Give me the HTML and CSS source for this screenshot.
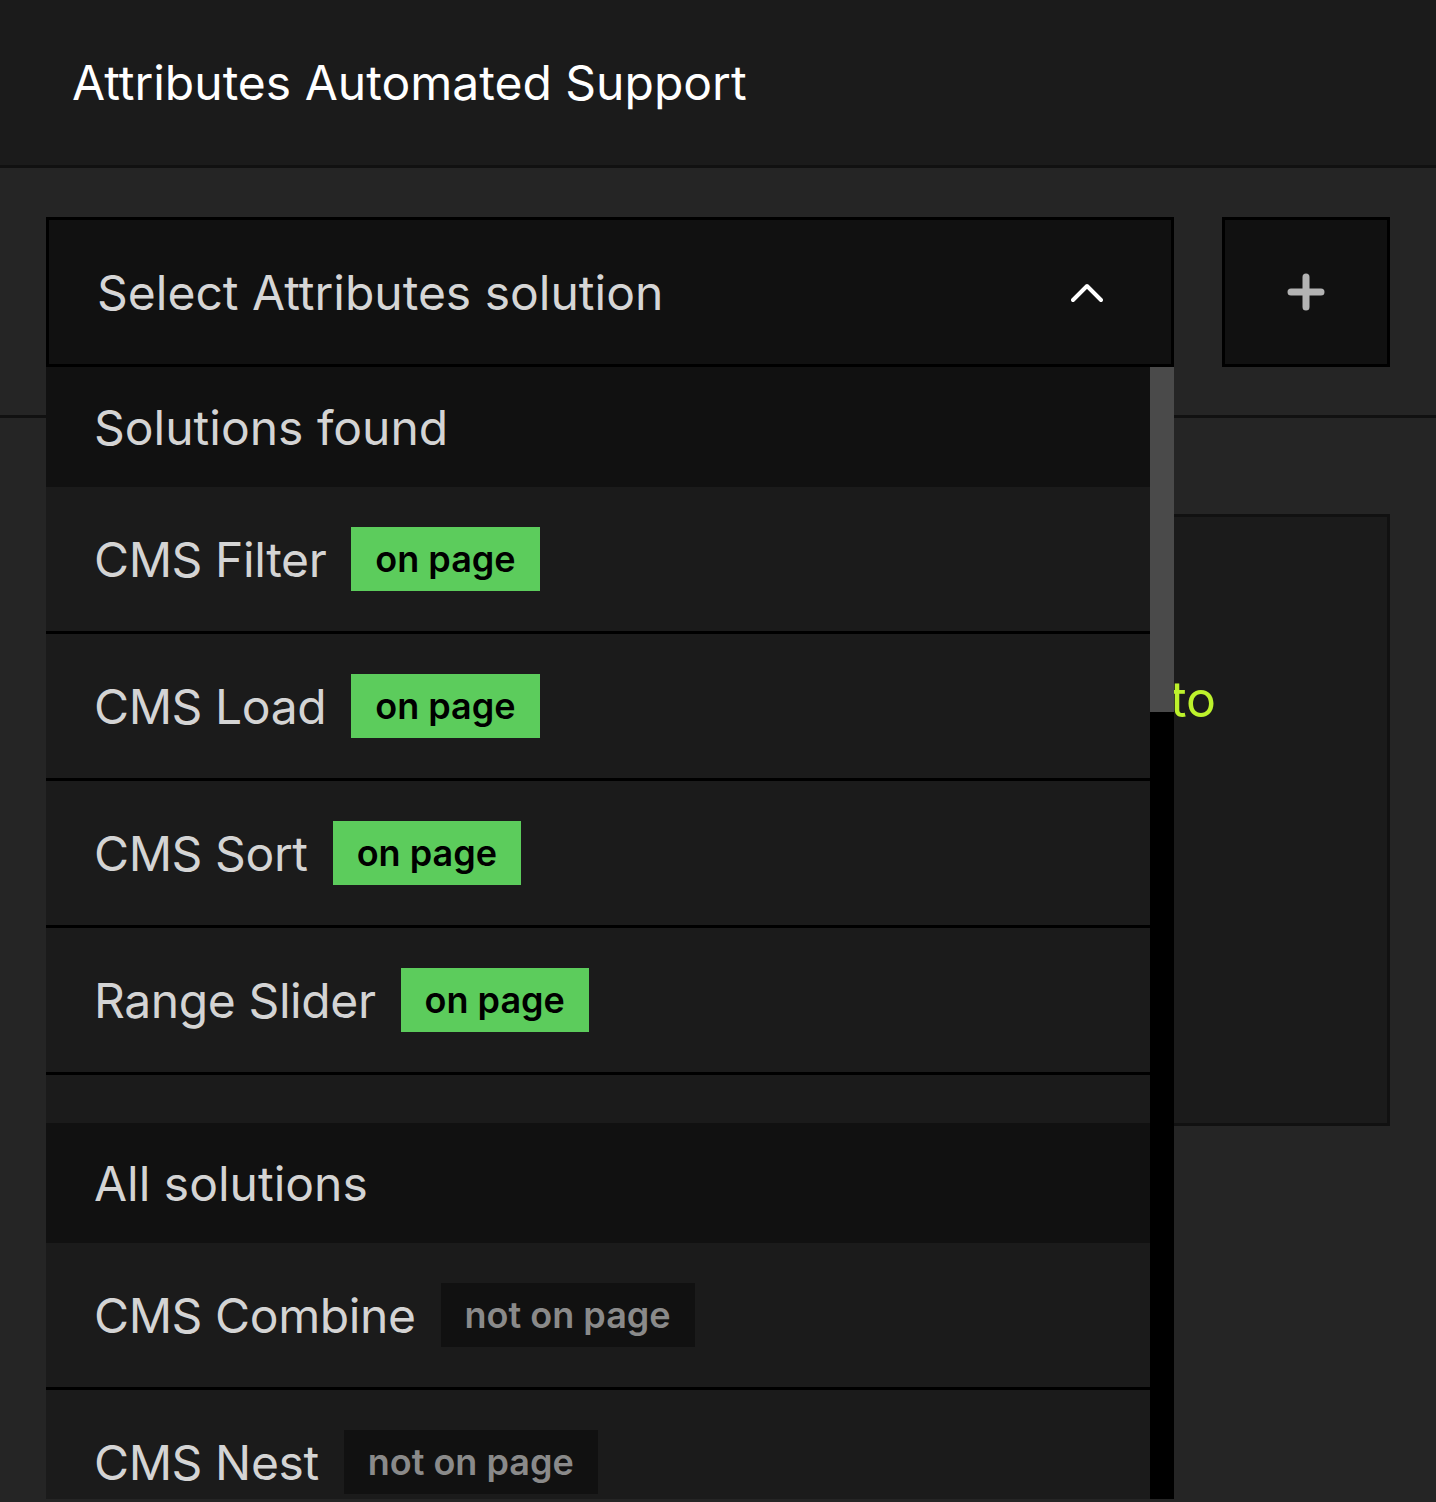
FILE: index.html
```html
<!DOCTYPE html>
<html lang="en">
<head>
  <meta charset="UTF-8" />
  <meta name="viewport" content="width=device-width, initial-scale=1.0"/>
  <title>Attributes Automated Support</title>
  <link rel="stylesheet" href="styles.css">
</head>
<body>

  <header class="topbar">
    <h1>Attributes Automated Support</h1>
  </header>

  <section class="toolbar">
    <div class="select-wrap">
      <button class="select">
        <span>Select Attributes solution</span>
        <svg class="chevron" width="32" height="22" viewBox="0 0 32 22">
          <polyline points="2,19 16,5 30,19" fill="none" stroke="#fff" stroke-width="4" stroke-linecap="round" stroke-linejoin="round"/>
        </svg>
      </button>

      <div class="dropdown">
        <div class="options">
          <div class="group">
            <div class="group-title">Solutions found</div>
            <div class="option">CMS Filter <span class="badge on">on page</span></div>
            <div class="option">CMS Load <span class="badge on">on page</span></div>
            <div class="option">CMS Sort <span class="badge on">on page</span></div>
            <div class="option">Range Slider <span class="badge on">on page</span></div>
          </div>
          <div class="group">
            <div class="group-title">All solutions</div>
            <div class="option">CMS Combine <span class="badge off">not on page</span></div>
            <div class="option">CMS Nest <span class="badge off">not on page</span></div>
            <div class="option">CMS Prev-Next <span class="badge off">not on page</span></div>
            <div class="option">CMS Select <span class="badge off">not on page</span></div>
            <div class="option">CMS Slider <span class="badge off">not on page</span></div>
            <div class="option">CMS Tabs <span class="badge off">not on page</span></div>
            <div class="option">CMS Static <span class="badge off">not on page</span></div>
            <div class="option">CMS Anchor <span class="badge off">not on page</span></div>
            <div class="option">Copy to Clipboard <span class="badge off">not on page</span></div>
            <div class="option">Accordion <span class="badge off">not on page</span></div>
            <div class="option">Auto Video <span class="badge off">not on page</span></div>
            <div class="option">Auto Tabs <span class="badge off">not on page</span></div>
            <div class="option">Table of Contents <span class="badge off">not on page</span></div>
            <div class="option">Social Share <span class="badge off">not on page</span></div>
            <div class="option">Read Time <span class="badge off">not on page</span></div>
            <div class="option">Number Count <span class="badge off">not on page</span></div>
            <div class="option">Mirror Click <span class="badge off">not on page</span></div>
            <div class="option">Mirror Input <span class="badge off">not on page</span></div>
            <div class="option">Modal <span class="badge off">not on page</span></div>
          </div>
        </div>
        <div class="scrollbar"><div class="thumb"></div></div>
      </div>
    </div>

    <button class="add-btn">
      <svg width="38" height="38" viewBox="0 0 38 38">
        <path d="M19 4 V34 M4 19 H34" stroke="#b3b3b3" stroke-width="7" stroke-linecap="round"/>
      </svg>
    </button>
  </section>

  <main class="content">
    <div class="card">
      <p class="empty-msg">Pick a solution from the list to</p>
    </div>
  </main>

</body>
</html>
```

FILE: styles.css
```css
body {
  margin: 0;
  font-family: 'Inter', 'Liberation Sans', sans-serif;
  background: #252525;
  color: #d4d4d4;
  min-height: 100vh;
  overflow: hidden;
}

.topbar {
  height: 165px;
  background: #1b1b1b;
  border-bottom: 3px solid #111;
  display: flex;
  align-items: center;
  padding-left: 72px;
}

.topbar h1 {
  margin: 0;
  font-size: 48px;
  font-weight: 400;
  color: #fff;
}

.toolbar {
  display: flex;
  gap: 48px;
  padding: 49px 46px 48px;
  border-bottom: 3px solid #111;
}

.select-wrap {
  position: relative;
  flex: 1;
}

.select {
  width: 100%;
  height: 150px;
  display: flex;
  align-items: center;
  justify-content: space-between;
  padding: 0 68px 0 48px;
  background: #111;
  border: 3px solid #000;
  color: #d6d6d6;
  font-family: inherit;
  font-size: 48px;
  cursor: pointer;
}

.add-btn {
  width: 168px;
  height: 150px;
  display: flex;
  align-items: center;
  justify-content: center;
  background: #111;
  border: 3px solid #000;
  cursor: pointer;
}

/* dropdown menu, laid over the page */
.dropdown {
  position: absolute;
  top: 100%;
  left: 0;
  right: 0;
  height: 1132px;
  display: flex;
  z-index: 10;
}

.options {
  flex: 1;
  overflow: hidden;
  background: #1b1b1b;
}

.scrollbar {
  width: 24px;
  background: #000;
}

.thumb {
  height: 345px;
  background: #4a4a4a;
}

.group {
  padding-bottom: 48px;
}

.group-title {
  height: 120px;
  display: flex;
  align-items: center;
  padding-left: 48px;
  background: #111;
  font-size: 48px;
}

.option {
  height: 144px;
  display: flex;
  align-items: center;
  gap: 25px;
  padding-left: 48px;
  border-bottom: 3px solid #000;
  font-size: 48px;
  letter-spacing: -0.4px;
}

.badge {
  height: 64px;
  display: inline-flex;
  align-items: center;
  padding: 0 24px;
  font-size: 36px;
  font-weight: 600;
  letter-spacing: 0;
}

.badge.on {
  background: #5ccc5c;
  color: #000;
}

.badge.off {
  background: #111;
  color: #8a8a8a;
}

.content {
  padding: 96px 46px 0;
}

.card {
  height: 606px;
  background: #1b1b1b;
  border: 3px solid #111;
  padding: 0 171px 0 40px;
}

.empty-msg {
  margin: 152px 0 0;
  font-size: 50px;
  line-height: 60px;
  color: #bdf22c;
  text-align: right;
  white-space: nowrap;
}
```
